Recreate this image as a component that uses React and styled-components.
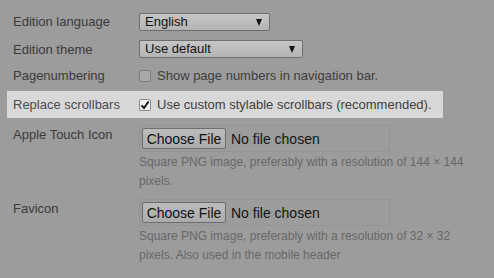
import React from 'react';
import styled, { createGlobalStyle } from 'styled-components';

const GlobalStyle = createGlobalStyle`
  html, body {
    margin: 0;
    padding: 0;
    background: #9c9c9c;
  }
  body {
    font-family: 'Liberation Sans', Arial, sans-serif;
    font-size: 13px;
    color: #3b3b3b;
  }
`;

const Form = styled.div`
  width: 436px;
  padding: 7px 0 0 7px;
  display: flex;
  flex-direction: column;
`;

const Row = styled.div`
  display: flex;
  align-items: ${p => (p.$top ? 'flex-start' : 'center')};
  height: ${p => (p.$h ? `${p.$h}px` : 'auto')};
  margin-top: ${p => p.$mt || 0}px;
  padding: ${p => (p.$top ? '7px 6px 1px' : '0 6px')};
  background: ${p => (p.$highlight ? '#d8d8d8' : 'transparent')};
  color: ${p => (p.$highlight ? '#4b4b52' : '#3b3b3b')};
`;

const Label = styled.div`
  width: 126px;
  flex: none;
  line-height: 17px;
  padding-top: ${p => (p.$top ? '1px' : '0')};
`;

const Field = styled.div`
  flex: 1;
  display: flex;
  flex-direction: column;
  min-width: 0;
`;

const SelectWrap = styled.div`
  position: relative;
  width: ${p => p.$w}px;
  height: 18px;
  box-sizing: border-box;
  border: 1px solid #6f6f6f;
  border-radius: 2px;
  background: linear-gradient(#c6c6c6, #b4b4b4);
  color: #111;
  line-height: 16px;
  padding-left: 5px;
`;

const Arrow = styled.span`
  position: absolute;
  right: 7px;
  top: 5px;
  width: 0;
  height: 0;
  border-left: 3.5px solid transparent;
  border-right: 3.5px solid transparent;
  border-top: 7px solid #111;
`;

const CheckLine = styled.label`
  display: flex;
  align-items: center;
  gap: 6px;
  line-height: 17px;
  color: ${p => (p.$dark ? '#404040' : '#3e3e3e')};
`;

const Box = styled.span`
  width: 12px;
  height: 12px;
  box-sizing: border-box;
  border: 1px solid ${p => (p.$checked ? '#8a8a8a' : '#7c7c7c')};
  border-radius: 2px;
  background: ${p => (p.$checked ? '#f2f2f2' : '#a9a9a9')};
  display: flex;
  align-items: center;
  justify-content: center;
  flex: none;
`;

const FileBox = styled.div`
  width: 251px;
  height: 27px;
  box-sizing: border-box;
  border: 1px solid rgba(0, 0, 0, 0.05);
  padding: 2px;
  display: flex;
  align-items: center;
  gap: 5px;
  color: #141414;
  font-size: 14px;
`;

const FileButton = styled.span`
  width: 84px;
  height: 21px;
  box-sizing: border-box;
  border: 1px solid #6e6e6e;
  border-radius: 2px;
  background: linear-gradient(#bcbcbc, #ababab);
  color: #111;
  font-size: 14px;
  display: flex;
  align-items: center;
  justify-content: center;
`;

const Help = styled.div`
  width: 340px;
  margin-top: 1px;
  font-size: 12px;
  line-height: 19px;
  color: #686868;
`;

const Check = () => (
  <svg width="10" height="10" viewBox="0 0 10 10">
    <path d="M1.5 5.3 L4 8 L8.6 1.5" fill="none" stroke="#111" strokeWidth="1.9" />
  </svg>
);

const App = () => (
  <>
    <GlobalStyle />
    <Form>
      <Row $h={29}>
        <Label>Edition language</Label>
        <Field>
          <SelectWrap $w={131}>
            English
            <Arrow />
          </SelectWrap>
        </Field>
      </Row>
      <Row $h={26}>
        <Label>Edition theme</Label>
        <Field>
          <SelectWrap $w={164}>
            Use default
            <Arrow />
          </SelectWrap>
        </Field>
      </Row>
      <Row $h={27}>
        <Label>Pagenumbering</Label>
        <CheckLine>
          <Box />
          Show page numbers in navigation bar.
        </CheckLine>
      </Row>
      <Row $h={27} $mt={2} $highlight>
        <Label>Replace scrollbars</Label>
        <CheckLine $dark>
          <Box $checked>
            <Check />
          </Box>
          Use custom stylable scrollbars (recommended).
        </CheckLine>
      </Row>
      <Row $top>
        <Label $top>Apple Touch Icon</Label>
        <Field>
          <FileBox>
            <FileButton>Choose File</FileButton>
            No file chosen
          </FileBox>
          <Help>Square PNG image, preferably with a resolution of 144 × 144 pixels.</Help>
        </Field>
      </Row>
      <Row $top>
        <Label $top>Favicon</Label>
        <Field>
          <FileBox>
            <FileButton>Choose File</FileButton>
            No file chosen
          </FileBox>
          <Help>Square PNG image, preferably with a resolution of 32 × 32 pixels. Also used in the mobile header</Help>
        </Field>
      </Row>
    </Form>
  </>
);

export default App;
